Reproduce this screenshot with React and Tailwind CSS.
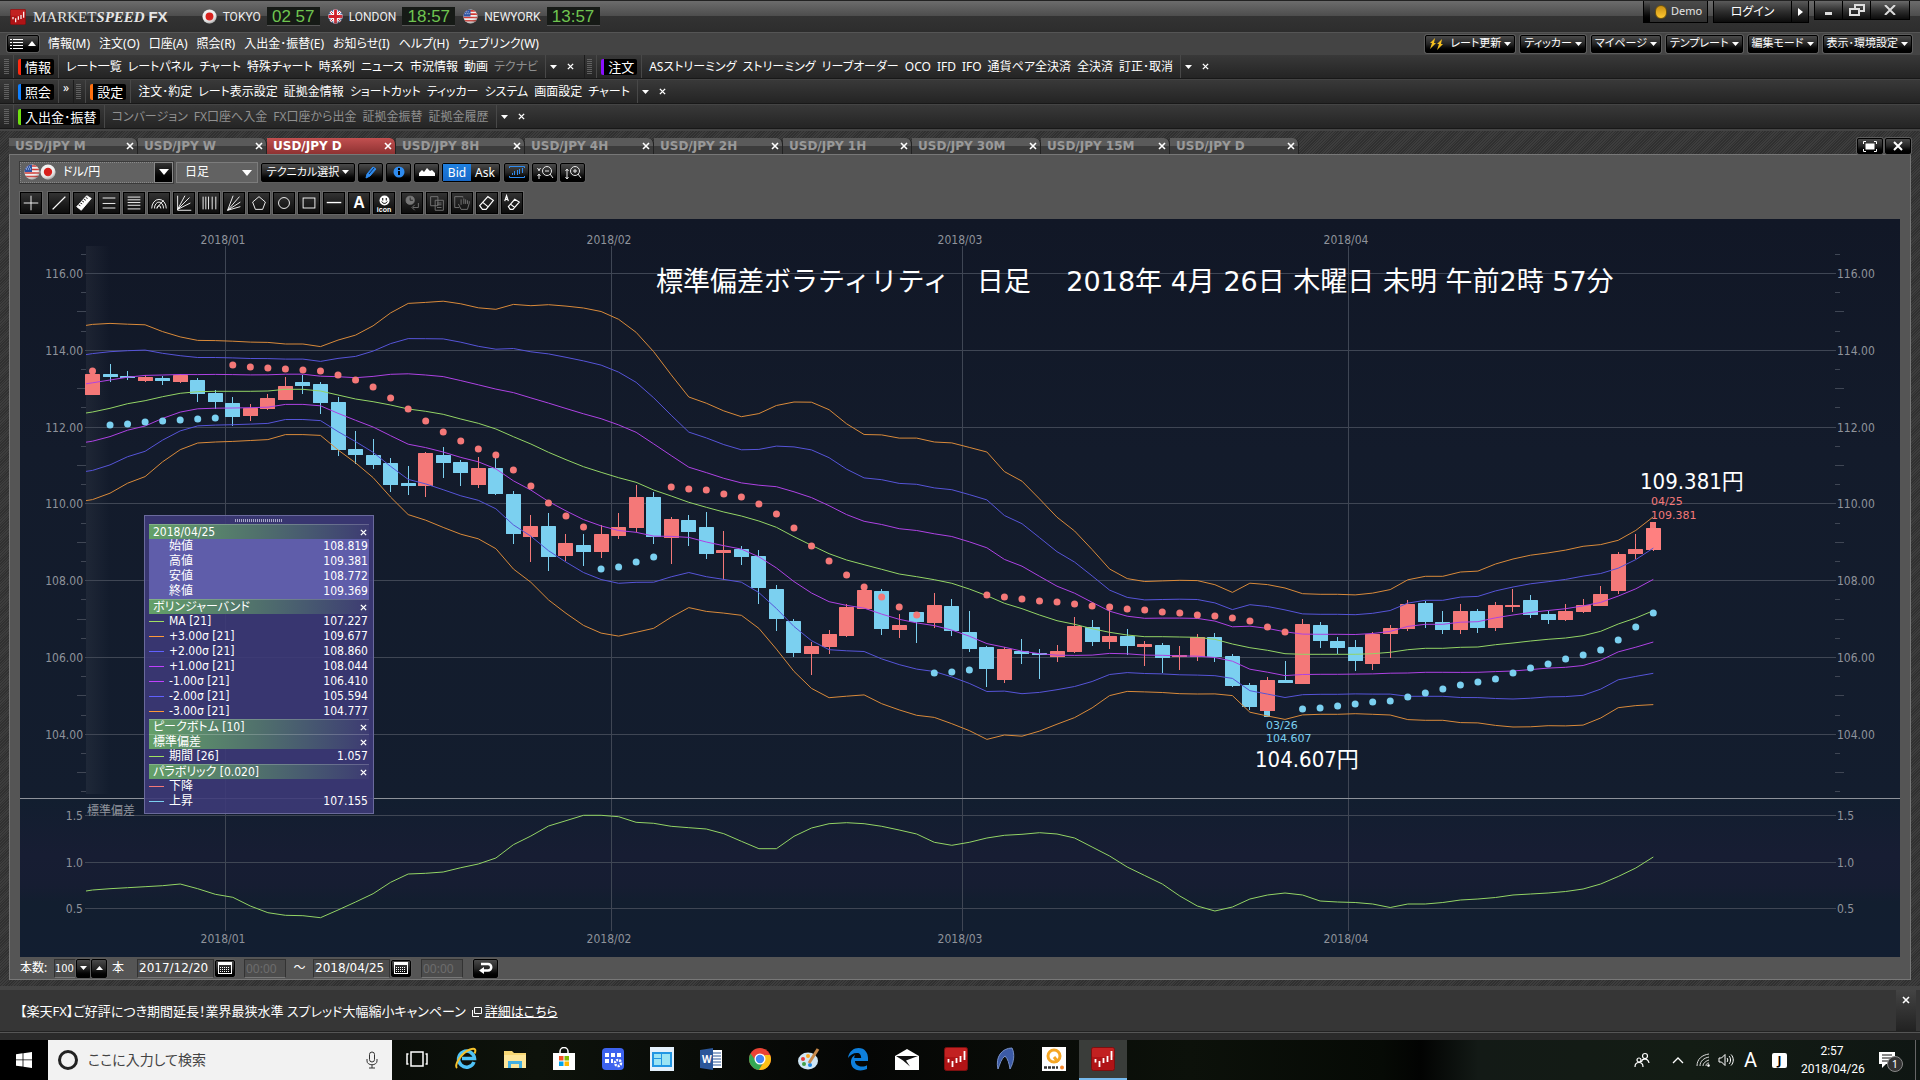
import clsx from 'clsx'

const UI = "font-['Noto_Sans','Noto_Sans_CJK_JP',sans-serif]"
const NUM = "font-['DejaVu_Sans_Condensed','Noto_Sans_CJK_JP',sans-serif]"
const WIDE = "font-['DejaVu_Sans','Noto_Sans_CJK_JP',sans-serif]"
const HATCH = 'bg-[repeating-linear-gradient(135deg,#303030_0px,#303030_1px,#3d3d3d_1px,#3d3d3d_2px)]'
const GLOSS = 'bg-linear-to-b from-[#4a4a4a] via-[#262626] to-black border border-black rounded-xs shadow-[0_0_0_1px_#5c5c5c]'

/* ---------- chart data, y in chart pixels ---------- */

// [direction, body top, body bottom, high, low]
const CANDLES = [
  ['u', 374, 395, 374, 395], ['d', 374, 377, 364, 382], ['d', 376, 378, 371, 380], ['u', 377, 381, 375, 382],
  ['d', 378, 381, 376, 385], ['u', 375, 382, 374, 383], ['d', 380, 394, 378, 402], ['d', 393, 402, 390, 409],
  ['d', 403, 417, 397, 426], ['u', 408, 416, 404, 421], ['u', 398, 409, 394, 410], ['u', 386, 400, 377, 400],
  ['d', 382, 386, 375, 394], ['d', 384, 403, 382, 414], ['d', 402, 450, 397, 456], ['d', 449, 455, 431, 464],
  ['d', 455, 465, 439, 469], ['d', 463, 485, 458, 492], ['d', 483, 486, 466, 495], ['u', 453, 486, 452, 497],
  ['d', 455, 463, 447, 478], ['d', 462, 473, 460, 486], ['u', 468, 485, 457, 488], ['d', 468, 494, 458, 495],
  ['d', 494, 534, 491, 544], ['u', 526, 537, 515, 562], ['d', 526, 557, 513, 571], ['u', 543, 556, 534, 561],
  ['d', 545, 552, 534, 566], ['u', 534, 552, 525, 558], ['u', 527, 536, 513, 539], ['u', 497, 528, 485, 532],
  ['d', 497, 537, 492, 544], ['u', 519, 538, 517, 564], ['d', 520, 532, 515, 546], ['d', 527, 554, 512, 559],
  ['u', 550, 553, 531, 580], ['d', 549, 557, 546, 565], ['d', 556, 588, 550, 604], ['d', 589, 619, 585, 631],
  ['d', 621, 653, 619, 657], ['u', 646, 654, 642, 675], ['u', 634, 647, 630, 654], ['u', 607, 636, 604, 637],
  ['u', 590, 609, 588, 609], ['d', 591, 629, 589, 635], ['u', 625, 630, 614, 638], ['d', 612, 622, 612, 643],
  ['u', 605, 623, 593, 628], ['d', 606, 631, 599, 636], ['d', 632, 649, 611, 652], ['d', 647, 669, 646, 687],
  ['u', 649, 680, 647, 683], ['d', 651, 654, 639, 664], ['d', 653, 655, 649, 679], ['u', 651, 657, 645, 662],
  ['u', 626, 652, 617, 653], ['d', 627, 642, 620, 646], ['u', 636, 642, 608, 649], ['d', 636, 646, 629, 655],
  ['u', 644, 647, 641, 666], ['d', 645, 658, 643, 673], ['u', 655, 657, 646, 670], ['u', 637, 657, 634, 661],
  ['d', 637, 657, 633, 662], ['d', 656, 686, 654, 687], ['d', 685, 707, 683, 710], ['u', 680, 711, 677, 716],
  ['d', 680, 683, 661, 683], ['u', 624, 684, 619, 684], ['d', 625, 641, 622, 648], ['d', 641, 648, 637, 654],
  ['d', 647, 661, 640, 671], ['u', 634, 664, 632, 670], ['u', 628, 634, 625, 658], ['u', 604, 629, 600, 631],
  ['d', 603, 622, 601, 628], ['d', 622, 630, 611, 634], ['u', 611, 630, 604, 634], ['d', 611, 628, 609, 633],
  ['u', 605, 628, 602, 631], ['u', 605, 607, 589, 612], ['d', 600, 615, 595, 618], ['d', 614, 620, 611, 624],
  ['u', 611, 620, 604, 621], ['u', 605, 612, 599, 613], ['u', 594, 606, 586, 606], ['u', 554, 591, 552, 594],
  ['u', 549, 554, 534, 559], ['u', 528, 550, 528, 551],
]

const MA = [
  412, 408.3, 403.7, 400.7, 396.7, 393.3, 391.7, 391.3, 391.3, 391.3, 391, 389.3, 389.3, 391, 395, 399, 401.7, 405,
  409, 411.3, 414.3, 419, 423.3, 429, 436.7, 444, 452.3, 459.7, 466.7, 472.3, 477.7, 482.3, 490, 496, 502.3, 507.3,
  512, 516, 521, 527.3, 536.7, 545.3, 553.7, 560, 564.7, 569.3, 574, 576.7, 579.7, 583.3, 589, 595.7, 603.3, 608.7,
  615, 620.7, 624.3, 628.7, 632.3, 635, 636.7, 636.7, 637, 637.3, 639.3, 644, 647.7, 650.3, 653.7, 654.3, 654.3,
  654.3, 654.3, 653.7, 652.3, 649.7, 648.3, 648.3, 647.3, 647, 644.7, 643, 641, 639.3, 638, 635.7, 631.3, 624, 618,
  610.7,
]

const SIGMA = [
  29.2, 28.3, 26.5, 25.3, 21.7, 18.8, 17.1, 16.9, 16.7, 16.4, 16.2, 15.1, 15.1, 14.8, 18.3, 21.3, 25.3, 30.7, 35.2,
  36.3, 37.7, 38.4, 38.5, 39.9, 44.1, 46.1, 49.2, 51.2, 52.9, 53.6, 52.8, 50, 46.1, 40.4, 35.1, 34.7, 33.7, 33.1,
  35.8, 40.6, 44.9, 47.7, 48, 45.4, 43.4, 44.8, 45.3, 46.2, 45.9, 46.8, 47.2, 47.9, 43.9, 42.5, 38.7, 34.5, 31.1,
  26.4, 21.1, 18.8, 18.4, 18.6, 18.9, 18.9, 18.2, 17.2, 21.5, 21.9, 21.9, 20.2, 20, 20, 19.8, 20.2, 20.9, 23.3, 24,
  24, 25.1, 25.3, 26.9, 28, 28.6, 28.8, 29.3, 29.8, 28.9, 27.9, 29.2, 31.3,
]

const STDDEV = [
  890, 888.7, 887.7, 886.7, 885.7, 884, 888.7, 894.3, 897.3, 906, 912.7, 915.3, 915.7, 917.7, 910, 902, 893.7, 882.3,
  874, 873.3, 872, 867.7, 864, 858, 844.7, 836, 826, 820.7, 815.3, 815.3, 816.7, 822.3, 823.3, 826.3, 827.7, 829,
  833.7, 841.3, 848.7, 848.7, 836.3, 828, 823.7, 822.7, 823.7, 826.3, 830, 834, 842.3, 845.3, 842.3, 838, 835.3,
  834.3, 832.7, 834, 838, 847, 856, 867, 875.5, 884, 896, 906, 911, 907, 899, 895, 893, 895, 901, 902, 902.5, 904,
  907.5, 904, 904, 902.5, 900, 899, 897.5, 895, 894, 893, 891.5, 889, 884, 876.5, 868, 857,
]

// parabolic runs: first candle index, colour, values
const SAR = [
  [0, '#f47878', [371]],
  [1, '#7bd0f0', [425, 424, 422, 421, 420, 419, 418]],
  [8, '#f47878', [365, 367, 368, 369, 370, 371, 375, 380, 387, 398, 409, 421, 432, 441, 449, 455, 470, 486, 503, 516, 527]],
  [29, '#7bd0f0', [569, 567, 562, 557]],
  [33, '#f47878', [487, 489, 490, 494, 497, 504, 514, 528, 546, 561, 575, 587, 597, 607, 615]],
  [48, '#7bd0f0', [673, 672, 670]],
  [51, '#f47878', [595, 597, 599, 601, 602, 604, 606, 607, 609, 610, 612, 613, 615, 616, 618, 621, 627, 632]],
  [69, '#7bd0f0', [709, 708, 706, 704, 702, 701, 697, 693, 689, 685, 682, 679, 673, 668, 664, 659, 655, 650, 640, 627, 613]],
]

const xAt = (i) => 92.5 + i * 17.537
const yAt = (price) => 273.5 + (116 - price) * 38.4
const lineAt = (price) => Math.floor(yAt(price)) + 0.5

const toPoints = (ys) =>
  [`86,${ys[0] + 1}`, ...ys.map((y, i) => `${xAt(i).toFixed(1)},${y.toFixed(1)}`)].join(' ')

const BANDS = [
  [3, '#d98a3a'], [-3, '#d98a3a'], [2, '#5654d8'], [-2, '#5654d8'], [1, '#ae42e4'], [-1, '#ae42e4'],
]

const MONTHS = [
  ['2018/01', 225.5, 223], ['2018/02', 611.5, 609], ['2018/03', 962.5, 960], ['2018/04', 1348.5, 1346],
]
const PRICES = [116, 114, 112, 110, 108, 106, 104]
const HALF_STEPS = Array.from({ length: 29 }, (_, i) => 116.5 - i * 0.5).filter((p) => p % 2 !== 0)
const DEV_LEVELS = [['1.5', 815.5], ['1.0', 862.5], ['0.5', 908.5]]

function PriceChart() {
  return (
    <svg viewBox="20 219 1880 738" className={clsx('block w-full h-auto', NUM)} role="img" aria-label="USD/JPY">
      <defs>
        <linearGradient id="main-bg" x1="0" y1="0" x2="0" y2="1">
          <stop offset="0" stopColor="#111726" />
          <stop offset="0.4" stopColor="#131b2b" />
          <stop offset="1" stopColor="#131d2e" />
        </linearGradient>
        <linearGradient id="sub-bg" x1="0" y1="0" x2="0" y2="1">
          <stop offset="0" stopColor="#121e2f" />
          <stop offset="0.35" stopColor="#171d33" />
          <stop offset="0.55" stopColor="#161d32" />
          <stop offset="0.65" stopColor="#121e2f" />
          <stop offset="1" stopColor="#121e31" />
        </linearGradient>
        <linearGradient id="edge" x1="0" y1="0" x2="1" y2="0">
          <stop offset="0" stopColor="#fff" stopOpacity="0.05" />
          <stop offset="1" stopColor="#fff" stopOpacity="0" />
        </linearGradient>
      </defs>
      <rect x="20" y="219" width="1880" height="580" fill="url(#main-bg)" />
      <rect x="20" y="799" width="1880" height="158" fill="url(#sub-bg)" />
      <rect x="86" y="246" width="24" height="548" fill="url(#edge)" />

      {/* grid */}
      <g stroke="#3f4654" strokeWidth="1">
        {MONTHS.map(([m, x]) => <line key={m} x1={x} x2={x} y1="246" y2="931" />)}
        {PRICES.map((p) => <line key={p} x1="85" x2="1836" y1={lineAt(p)} y2={lineAt(p)} />)}
        {DEV_LEVELS.map(([l, y]) => <line key={l} x1="85" x2="1836" y1={y} y2={y} />)}
        {HALF_STEPS.map((p) => {
          const y = lineAt(p)
          const len = p % 1 === 0 ? 9 : 5
          return (
            <g key={p}>
              <line x1={86 - len} x2="86" y1={y} y2={y} />
              <line x1="1835" x2={1835 + len} y1={y} y2={y} />
            </g>
          )
        })}
      </g>
      <line x1="20" x2="1900" y1="798.5" y2="798.5" stroke="#8e929a" />

      {/* axis labels */}
      <g fill="#8f939b" fontSize="12">
        {PRICES.map((p) => (
          <g key={p}>
            <text x="83" y={Math.floor(yAt(p)) + 5} textAnchor="end">{p.toFixed(2)}</text>
            <text x="1837" y={Math.floor(yAt(p)) + 5}>{p.toFixed(2)}</text>
          </g>
        ))}
        {DEV_LEVELS.map(([l, y]) => (
          <g key={l}>
            <text x="83" y={Math.floor(y) + 5} textAnchor="end">{l}</text>
            <text x="1837" y={Math.floor(y) + 5}>{l}</text>
          </g>
        ))}
        {MONTHS.map(([m, , x]) => (
          <g key={m} textAnchor="middle">
            <text x={x} y="244">{m}</text>
            <text x={x} y="943">{m}</text>
          </g>
        ))}
        <text x="87" y="815">標準偏差</text>
      </g>

      {/* candles */}
      {CANDLES.map(([dir, top, bottom, high, low], i) => {
        const fill = dir === 'u' ? '#f47878' : '#7bd0f0'
        const x = Math.floor(xAt(i)) + 0.5
        return (
          <g key={i} fill={i === 89 ? '#ff8080' : fill}>
            <rect x={x - 0.5} y={high} width="1" height={low - high} />
            <rect x={x - 7.5} y={top} width="15" height={bottom - top} rx="0.5" />
          </g>
        )
      })}
      <rect x="1264" y="711" width="6" height="6" fill="#7bd0f0" />
      <rect x="1650" y="522" width="6" height="6" fill="#f47878" />

      {/* bollinger bands */}
      <g fill="none" strokeWidth="1">
        {BANDS.map(([k, color]) => (
          <polyline key={k} stroke={color} points={toPoints(MA.map((y, i) => y - k * SIGMA[i]))} />
        ))}
        <polyline stroke="#93d465" points={toPoints(MA)} />
        <polyline stroke="#93d465" points={toPoints(STDDEV)} />
      </g>

      {/* parabolic */}
      {SAR.map(([start, color, values]) => (
        <g key={start} fill={color}>
          {values.map((y, i) => <circle key={i} cx={xAt(start + i)} cy={y} r="3.5" />)}
        </g>
      ))}

      {/* peak, bottom and notes */}
      <g fontSize="11" className={WIDE}>
        <g fill="#f47878">
          <text x="1651" y="505">04/25</text>
          <text x="1651" y="519">109.381</text>
        </g>
        <g fill="#7bd0f0">
          <text x="1266" y="729">03/26</text>
          <text x="1266" y="742">104.607</text>
        </g>
      </g>
      <g fill="#fff" fontSize="22">
        <text x="1640" y="489">109.381円</text>
        <text x="1255" y="767">104.607円</text>
      </g>
      <text x="656" y="291" fill="#fff" fontSize="27" className={clsx('whitespace-pre [font-feature-settings:normal]', WIDE)}>
        {'標準偏差ボラティリティ　日足　 2018年 4月 26日 木曜日 未明 午前2時 57分'}
      </text>
    </svg>
  )
}

/* ---------- legend window ---------- */

const LEGEND = [
  { title: '2018/04/25', tint: true, rows: [['', '始値', '108.819'], ['', '高値', '109.381'], ['', '安値', '108.772'], ['', '終値', '109.369']] },
  {
    title: 'ボリンジャーバンド',
    rows: [
      ['bg-[#a0e060]', 'MA [21]', '107.227'], ['bg-[#ff9838]', '+3.00σ [21]', '109.677'],
      ['bg-[#6060ff]', '+2.00σ [21]', '108.860'], ['bg-[#c040ff]', '+1.00σ [21]', '108.044'],
      ['bg-[#c040ff]', '-1.00σ [21]', '106.410'], ['bg-[#6060ff]', '-2.00σ [21]', '105.594'],
      ['bg-[#ff9838]', '-3.00σ [21]', '104.777'],
    ],
  },
  { title: 'ピークボトム [10]', rows: [] },
  { title: '標準偏差', rows: [['bg-[#a0e060]', '期間 [26]', '1.057']] },
  { title: 'パラボリック [0.020]', rows: [['bg-[#f47878]', '下降', ''], ['bg-[#7bd0f0]', '上昇', '107.155']] },
]

function LegendWindow() {
  return (
    <div className={clsx('absolute left-[124px] top-[296px] w-[230px] px-1 pb-1 border border-[#6a6a9c] bg-[#3d3a78]/90 text-xs text-white', NUM)}>
      <div className="h-2 flex justify-center items-center">
        <div className="w-12 h-[3px] bg-[repeating-linear-gradient(90deg,#a9a9c8_0px,#a9a9c8_1px,transparent_1px,transparent_2px)]" />
      </div>
      {LEGEND.map((sec) => (
        <section key={sec.title}>
          <div className="h-[15px] flex items-center justify-between pl-1 pr-0.5 border-t border-white/20 bg-linear-to-r from-[#64a068] via-[#50706c] via-50% to-[#3d3b72]">
            <h2 className="leading-[14px] whitespace-nowrap">{sec.title}</h2>
            <CloseButton className="size-[7px]" />
          </div>
          <table className={clsx('w-full border-collapse', sec.tint && 'bg-[#5f5daa]')}>
            <tbody>
              {sec.rows.map(([swatch, label, value]) => (
                <tr key={label} className="h-[15px] leading-[15px]">
                  <td className="w-5 p-0"><span className={clsx('block w-[15px] h-px', swatch)} /></td>
                  <th scope="row" className="p-0 font-normal text-left">{label}</th>
                  <td className="p-0 pr-px text-right">{value}</td>
                </tr>
              ))}
            </tbody>
          </table>
        </section>
      ))}
    </div>
  )
}

/* ---------- small parts ---------- */

function CloseButton({ className = 'size-2' }) {
  return (
    <button type="button" aria-label="閉じる" className="flex items-center justify-center">
      <svg viewBox="0 0 8 8" className={className} stroke="#fff" strokeWidth="1.6"><path d="M1 1l6 6M7 1L1 7" /></svg>
    </button>
  )
}

function Caret({ className = 'w-[7px] h-1' }) {
  return <svg viewBox="0 0 8 5" preserveAspectRatio="none" className={clsx('shrink-0', className)} fill="#fff"><path d="M0 0h8L4 5z" /></svg>
}

function FlagBall({ country, className = 'size-4' }) {
  return (
    <svg viewBox="0 0 16 16" className={clsx('shrink-0', className)}>
      <defs>
        <clipPath id={`ball-${country}`}><circle cx="8" cy="8" r="7.5" /></clipPath>
        <radialGradient id={`shade-${country}`} cx="0.4" cy="0.3" r="0.75">
          <stop offset="0.5" stopColor="#fff" stopOpacity="0" />
          <stop offset="1" stopColor="#000" stopOpacity="0.5" />
        </radialGradient>
      </defs>
      <g clipPath={`url(#ball-${country})`}>
        <rect width="16" height="16" fill="#f0f0f0" />
        {country === 'jp' && <circle cx="8" cy="8" r="4.2" fill="#d8201c" />}
        {country === 'uk' && (
          <>
            <rect width="16" height="16" fill="#23408e" />
            <path d="M0 0l16 16M16 0L0 16" stroke="#fff" strokeWidth="3" />
            <path d="M0 0l16 16M16 0L0 16" stroke="#d0202c" strokeWidth="1" />
            <path d="M8 0v16M0 8h16" stroke="#fff" strokeWidth="5" />
            <path d="M8 0v16M0 8h16" stroke="#d0202c" strokeWidth="3" />
          </>
        )}
        {country === 'us' && (
          <>
            <path d="M0 2h16M0 5.5h16M0 9h16M0 12.5h16" stroke="#d03a34" strokeWidth="1.7" />
            <rect width="8" height="8" fill="#2f55a4" />
            <path d="M1 3h6M2 5h5" stroke="#cfd8ee" strokeDasharray="1 1" />
          </>
        )}
        <rect width="16" height="16" fill={`url(#shade-${country})`} />
      </g>
    </svg>
  )
}

function SpeedLogo({ className }) {
  return (
    <svg viewBox="0 0 24 24" className={className}>
      <rect x="0.5" y="0.5" width="23" height="23" rx="2" fill="#b01416" stroke="#7c1010" />
      <rect x="1" y="1" width="22" height="9" rx="1.5" fill="#cf2a2a" opacity="0.6" />
      <path d="M4.500 12v3.500M8.500 14v6M12.500 11v5M16.500 9v6M20.500 4v9" stroke="#fff" strokeWidth="1.800" />
    </svg>
  )
}

/* ---------- header rows ---------- */

const CLOCKS = [['jp', 'TOKYO', '02 57'], ['uk', 'LONDON', '18:57'], ['us', 'NEWYORK', '13:57']]

function TitleBar() {
  return (
    <header className="h-8 flex items-center justify-between px-2.5 border-t border-[#222] bg-[linear-gradient(#6c6c6c,#4c4c4c_50%,#333_50%,#2d2d2d)]">
      <div className="flex items-center">
        <SpeedLogo className="size-4 mr-[7px]" />
        <h1 className="text-[15px] leading-5 text-[#e6e6e6] font-['Liberation_Serif',serif] whitespace-nowrap">
          MARKET<b className="italic">SPEED</b> <b className="font-['Liberation_Sans',sans-serif]">FX</b>
        </h1>
        <ul className="flex items-center gap-2 ml-[34px]">
          {CLOCKS.map(([c, city, time]) => (
            <li key={c} className="flex items-center gap-1.5 text-xs font-['Roboto',sans-serif] text-[#eee]">
              <FlagBall country={c} className="size-[15px]" />
              {city}
              <time className="w-[53px] h-[19px] text-center text-[17px] leading-[19px] text-[#6fc450] bg-[#161a16] border-b border-[#555] whitespace-pre font-['Liberation_Sans',sans-serif]">{time}</time>
            </li>
          ))}
        </ul>
      </div>
      <div className="flex items-start h-full gap-[5px]">
        <div className="flex h-[22px] border border-black border-t-0">
          <span className="w-1.5 bg-linear-to-b from-[#555] to-black" />
          <span className="w-[57px] flex items-center justify-center gap-1 bg-linear-to-b from-[#4c4c4c] to-[#2e2e2e] text-[11px] text-[#e4e4e4]">
            <span className="w-3 h-3.5 rounded-full border border-[#6b5210] bg-linear-to-b from-[#c98f10] to-[#ffc830]" />
            Demo
          </span>
        </div>
        <div className="flex h-[22px] border border-black border-t-0 bg-linear-to-b from-[#5a5a5a] via-[#2e2e2e] to-[#0c0c0c] text-xs text-white">
          <button type="button" className="w-[78px] border-r border-black">ログイン</button>
          <button type="button" aria-label="ログインメニュー" className="w-4 flex items-center justify-center">
            <svg viewBox="0 0 5 8" className="w-[5px] h-2" fill="#fff"><path d="M0 0v8l5-4z" /></svg>
          </button>
        </div>
        <div className="flex h-[19px] border border-black border-t-0 bg-linear-to-b from-[#6a6a6a] via-[#333] to-[#0c0c0c]">
          <button type="button" aria-label="最小化" className="w-7 border-r border-black flex items-center justify-center">
            <svg viewBox="0 0 10 10" className="size-2.5" fill="#ddd"><path d="M1 7h7v3H1z" /></svg>
          </button>
          <button type="button" aria-label="元に戻す" className="w-7 border-r border-black flex items-center justify-center">
            <svg viewBox="0 0 16 12" className="w-4 h-3" fill="none" stroke="#ddd" strokeWidth="2"><path d="M6 5V1h9v6h-4M1 5h9v6H1z" /></svg>
          </button>
          <button type="button" aria-label="閉じる" className="w-[38px] flex items-center justify-center">
            <svg viewBox="0 0 12 10" className="w-3 h-2.5" stroke="#ddd" strokeWidth="2"><path d="M1 0l10 10M11 0L1 10" /></svg>
          </button>
        </div>
      </div>
    </header>
  )
}

const MENU = ['情報(M)', '注文(O)', '口座(A)', '照会(R)', '入出金･振替(E)', 'お知らせ(I)', 'ヘルプ(H)', 'ウェブリンク(W)']
const MENU_BUTTONS = ['ティッカー', 'マイページ', 'テンプレート', '編集モード', '表示･環境設定']

function MenuRow() {
  return (
    <nav className="h-[22px] flex items-center justify-between pl-[7px] pr-2 bg-[#444] border-t border-[#555] text-xs text-white whitespace-nowrap">
      <div className="flex items-center gap-[9px]">
        <button type="button" aria-label="メニュー" className={clsx('w-8 h-[17px] flex items-center justify-center gap-1', GLOSS)}>
          <svg viewBox="0 0 14 11" className="w-3.5 h-[11px]" stroke="#fff"><path d="M0 1.500h2M3 1.500h10M0 4.500h2M3 4.500h10M0 7.500h2M3 7.500h10M0 10.500h2M3 10.500h10" /></svg>
          <Caret className="w-2 h-[5px] rotate-180" />
        </button>
        {MENU.map((m) => <button type="button" key={m}>{m}</button>)}
      </div>
      <div className="flex items-center gap-[5px] text-[11px]">
        <button type="button" className={clsx('h-[18px] flex items-center gap-[3px] px-[3px]', GLOSS)}>
          <svg viewBox="0 0 14 12" className="w-3.5 h-3 mr-1" fill="#f5c020"><path d="M6 0L1 5h2L1 11l6-6H5zM13 1L8 6h2l-2 6 6-6h-2z" /></svg>
          レート更新<Caret />
        </button>
        {MENU_BUTTONS.map((m) => (
          <button type="button" key={m} className={clsx('h-[18px] flex items-center gap-[3px] px-[3px]', GLOSS)}>{m}<Caret /></button>
        ))}
      </div>
    </nav>
  )
}

const Grip = () => (
  <span className="w-[5px] h-4 ml-0.5 mr-1 shrink-0 bg-[repeating-linear-gradient(#777_0px,#777_1px,transparent_1px,transparent_2px)] opacity-70" />
)

function ToolGroup({ label, bar, items, muted = [], more, closable = true }) {
  return (
    <div className="h-full flex items-center border-r border-[#1c1c1c] last:border-r-0">
      <Grip />
      <div className="flex items-center h-full px-1 border-x border-[#484848]">
        <span className={clsx('h-4 pl-1 pr-[3px] border-l-[3px] rounded-xs bg-black text-[13px] leading-4', bar)}>{label}</span>
      </div>
      {items.length > 0 && (
        <div className="flex items-center gap-1.5 px-[7px]">
          {items.map((t) => (
            <button type="button" key={t} className={muted.includes(t) ? 'text-[#909090]' : 'text-white'}>{t}</button>
          ))}
        </div>
      )}
      {more && <span className="self-start px-1 leading-4">»</span>}
      {closable && (
        <div className="flex items-center gap-2.5 h-full pl-1 pr-2.5 border-l border-[#484848]">
          <Caret className="w-[7px] h-1" />
          <CloseButton className="size-[7px]" />
        </div>
      )}
    </div>
  )
}

function ToolRow({ children }) {
  return (
    <div className="h-[25px] pl-0.5 flex items-center bg-linear-to-b from-[#393939] to-[#242424] border-t border-[#444] border-b border-b-[#181818] text-xs text-white whitespace-nowrap">
      {children}
    </div>
  )
}

const DEPOSIT = ['コンバージョン', 'FX口座へ入金', 'FX口座から出金', '証拠金振替', '証拠金履歴']

/* ---------- chart window ---------- */

const TABS = ['M', 'W', 'D', '8H', '4H', '2H', '1H', '30M', '15M', 'D']

function TabStrip() {
  return (
    <div className="flex items-end justify-between h-[23px]">
      <ul className="flex items-end">
        {TABS.map((t, i) => (
          <li
            key={i}
            className={clsx(
              'w-[129px] h-4 flex items-center justify-between pl-1.5 pr-[3px] border-r border-[#222] rounded-tr-md text-xs font-bold leading-4',
              WIDE,
              i === 2 ? 'bg-linear-to-b from-[#c25050] to-[#8e3232] text-white' : 'bg-[linear-gradient(#5a5a5a_50%,#3c3c3c_50%)] text-[#999]',
            )}
          >
            <button type="button">USD/JPY {t}</button>
            <CloseButton className="size-2" />
          </li>
        ))}
      </ul>
      <div className="flex gap-0.5">
        <button type="button" aria-label="最大化" className={clsx('w-[26px] h-4 flex items-center justify-center', GLOSS)}>
          <svg viewBox="0 0 14 11" className="w-3.5 h-[11px]" fill="none" stroke="#fff">
            <path d="M0.500 3V0.500H3M11 0.500h2.500V3M13.500 8v2.500H11M3 10.500H0.500V8" /><rect x="3" y="3" width="8" height="5" fill="#fff" />
          </svg>
        </button>
        <button type="button" aria-label="閉じる" className={clsx('w-[26px] h-4 flex items-center justify-center', GLOSS)}>
          <svg viewBox="0 0 10 10" className="size-2.5" stroke="#fff" strokeWidth="2"><path d="M1 1l8 8M9 1L1 9" /></svg>
        </button>
      </div>
    </div>
  )
}

function IconButton({ label, children }) {
  return (
    <button type="button" aria-label={label} className={clsx('w-[25px] h-[19px] flex items-center justify-center', GLOSS)}>
      <svg viewBox="0 0 18 16" className="w-[18px] h-4 shrink-0" fill="none" stroke="#e8e8e8">{children}</svg>
    </button>
  )
}

function ChartControls() {
  return (
    <div className="flex items-center gap-[3px] h-[22px] text-xs text-white">
      <div className="relative">
        <select aria-label="通貨ペア" defaultValue="usd" className="w-[153px] h-[21px] pl-[42px] appearance-none bg-[#626262] border border-[#8a8a8a] border-dotted outline-1 outline-[#3a3a3a]">
          <option value="usd">ドル/円</option>
        </select>
        <span className="absolute left-1 top-0.5 flex pointer-events-none"><FlagBall country="us" /><FlagBall country="jp" /></span>
        <span className="absolute right-0 top-0 w-[19px] h-[21px] flex items-center justify-center border border-[#888] bg-linear-to-b from-[#333] to-black pointer-events-none"><Caret className="w-2.5 h-1.5" /></span>
      </div>
      <div className="relative">
        <select aria-label="足種" defaultValue="d" className="w-[82px] h-[21px] pl-2 appearance-none bg-[#626262] border border-[#7c7c7c]">
          <option value="d">日足</option>
        </select>
        <Caret className="absolute right-1.5 top-2 w-2.5 h-1.5 pointer-events-none" />
      </div>
      <button type="button" className={clsx('w-[94px] h-[19px] flex items-center justify-center gap-[3px] text-[11px] whitespace-nowrap', GLOSS)}>テクニカル選択<Caret /></button>
      <IconButton label="描画"><path d="M5 10l6-7 3 2-6 7-4 2z" fill="#2f8cf0" stroke="#2f8cf0" /><path d="M7 10l5-6" stroke="#0a2a55" /></IconButton>
      <IconButton label="情報"><circle cx="9" cy="8" r="5.500" fill="#2f8cf0" stroke="none" /><path d="M9 7v4M9 4v2" stroke="#000" strokeWidth="2" /></IconButton>
      <IconButton label="エリア"><path d="M1 12V9l3-3 2 2 3-4 3 3 2-1 3 3v3z" fill="#fff" stroke="none" /></IconButton>
      <div className={clsx('w-[58px] h-[19px] mr-px flex', GLOSS)}>
        <button type="button" aria-pressed="true" className="flex-1 leading-[17px] bg-linear-to-b from-[#1f80e0] to-[#1668c8]">Bid</button>
        <button type="button" aria-pressed="false" className="flex-1 leading-[17px]">Ask</button>
      </div>
      <IconButton label="ライン"><path d="M1.500 4V2.500h15V4M1.500 12v1.500h15V12M4.500 9v2M6.500 7v4M9.500 6v5M11.500 5v5M14.500 4v5" stroke="#2f8cf0" /></IconButton>
      <IconButton label="縮小"><circle cx="11" cy="7" r="4.500" /><path d="M9 7h4M14 10l3 4M3 5v2M3 10v5M1.500 12L3 10l1.500 2M1.500 4L3 6.500 4.500 4" /></IconButton>
      <IconButton label="拡大"><circle cx="11" cy="7" r="4.500" /><path d="M9 7h4M11 5v4M14 10l3 4M3 5v10M1.500 7L3 5l1.500 2M1.500 13L3 15l1.500-2" /></IconButton>
    </div>
  )
}

const TOOLS = [
  ['十字', <path key="p" d="M3 11h16M11 3v16" />],
  ['線', <path key="p" d="M4 18L18 4" strokeWidth="1.5" />],
  ['定規', <g key="p"><path d="M3 15L14 3l5 3L8 19z" fill="#fff" /><path d="M5 13l2 1M7 11l2 1M9 9l2 1M11 7l2 1M13 5l2 1" stroke="#111" /></g>],
  ['平行線', <path key="p" d="M4 5.500h14M4 11.500h14M4 16.500h14" />],
  ['多重線', <path key="p" d="M4 4.500h14M4 7.500h14M4 10.500h14M4 13.500h14M4 17.500h14" />],
  ['アーク', <path key="p" d="M3 17a8 10 0 0 1 16 0M6 17a5 7 0 0 1 10 0M9 17a2 3 0 0 1 4 0M8 17l8-9" />],
  ['ファン', <path key="p" d="M4 3v16h15M4 18L12 3M4 18L17 5M4 18l14-7" />],
  ['縦線', <path key="p" d="M4.500 4v14M7.500 4v14M10.500 4v14M14.500 4v14M18.500 4v14" />],
  ['ギャン', <path key="p" d="M4 19L10 3M4 19L17 4M4 19l14-9M4 19l14-4" />],
  ['五角形', <path key="p" d="M11 4l7 6-3 8H7l-3-8z" />],
  ['円', <circle key="p" cx="11" cy="11" r="6" />],
  ['四角', <rect key="p" x="4.500" y="5.500" width="13" height="11" />],
  ['水平線', <path key="p" d="M3 10.500h16" strokeWidth="1.500" />],
  ['文字', null, 'A'],
  ['アイコン', <g key="p"><circle cx="11" cy="11" r="10" fill="#fff" stroke="none" /><path d="M7.500 6v5M14.500 6v5M5.500 13c2 5 9 5 11 0" stroke="#000" strokeWidth="2" /></g>, 'icon'],
  ['履歴', <g key="p" stroke="#777"><circle cx="9" cy="8" r="4.500" fill="#777" /><path d="M9 5v3h3" stroke="#222" /><path d="M18 11v5h-6M14 13l-3 3 3 3" /></g>],
  ['複製', <path key="p" d="M4 4h8v10H4zM9 8h9v11H9zM11 11h5M11 13h5M11 16h5" stroke="#777" />],
  ['移動', <path key="p" d="M12 5V4H3v12h5M7 12l3 6h7l2-7V9M10 13V7M13 12V6M15 12V7M17 12V8" stroke="#777" />],
  ['消去', <path key="p" d="M3 14l9-10 6 4-8 10H6zM6 10l6 5" strokeWidth="1.300" />],
  ['全消去', <path key="p" d="M7 15l7-8 5 3-7 8h-3zM9 12l5 4M3 9l2-6 2 6M4 7h2" strokeWidth="1.300" />],
]

function DrawTools() {
  return (
    <div className="flex gap-[3px] h-[22px]">
      {TOOLS.map(([label, shape, text], i) => (
        <button
          type="button"
          key={label}
          aria-label={label}
          className={clsx(
            'w-[22px] h-[22px] border border-black bg-linear-to-b from-[#333] to-[#0c0c0c] shadow-[0_0_0_1px_#666] text-white font-bold leading-none',
            (i === 0 || i === 14) && 'mr-[3px]',
            text === 'icon' && "flex flex-col items-center justify-end text-[7px] font-['Liberation_Sans',sans-serif]",
            text === 'A' && "text-base font-['Liberation_Sans',sans-serif]",
          )}
        >
          {shape && (
            <svg viewBox="0 0 22 22" className={text ? 'size-[11px]' : 'size-5'} fill="none" stroke="#fff">{shape}</svg>
          )}
          {text}
        </button>
      ))}
    </div>
  )
}

const FIELD = 'h-[19px] bg-[#4c4c4c] border border-[#333] border-b-[#777] text-white'

function CalendarButton() {
  return (
    <button type="button" aria-label="カレンダー" className={clsx('w-5 h-[17px] flex items-center justify-center', GLOSS)}>
      <svg viewBox="0 0 14 12" className="w-3.5 h-3"><rect x="0.500" y="0.500" width="13" height="11" fill="none" stroke="#fff" /><path d="M1 2h12" stroke="#fff" strokeWidth="2" /><path d="M2 5.500h10M2 7.500h10M2 9.500h10" stroke="#fff" strokeDasharray="1 1" /></svg>
    </button>
  )
}

function RangeBar() {
  return (
    <form className="h-[22px] flex items-center text-xs text-white whitespace-nowrap">
      <label htmlFor="bars" className="w-[34px]">本数:</label>
      <input id="bars" defaultValue="100" className={clsx('w-[22px] text-[11px]', FIELD, NUM)} />
      <button type="button" aria-label="減らす" className={clsx('w-[15px] h-[19px] flex items-center justify-center', GLOSS)}><Caret /></button>
      <button type="button" aria-label="増やす" className={clsx('w-4 h-[19px] flex items-center justify-center', GLOSS)}><Caret className="w-[7px] h-1 rotate-180" /></button>
      <span className="w-[30px] pl-[5px]">本</span>
      <input aria-label="開始日" defaultValue="2017/12/20" className={clsx('w-[77px] px-px', FIELD, WIDE)} />
      <span className="w-[30px] pl-px"><CalendarButton /></span>
      <input aria-label="開始時刻" defaultValue="00:00" disabled className={clsx('w-[42px] px-px disabled:text-[#6c6c6c]', FIELD)} />
      <span className="w-[27px] text-center">～</span>
      <input aria-label="終了日" defaultValue="2018/04/25" className={clsx('w-[77px] px-px', FIELD, WIDE)} />
      <span className="w-[31px] pl-px"><CalendarButton /></span>
      <input aria-label="終了時刻" defaultValue="00:00" disabled className={clsx('w-[42px] px-px disabled:text-[#6c6c6c]', FIELD)} />
      <button type="button" aria-label="適用" className={clsx('w-[25px] h-[19px] ml-2.5 flex items-center justify-center', GLOSS)}>
        <svg viewBox="0 0 16 12" className="w-4 h-3" fill="none" stroke="#fff" strokeWidth="2.500"><path d="M3 2h7a3 3 0 0 1 0 6.500H5" /><path d="M6 5v7L1 8.500z" fill="#fff" stroke="none" /></svg>
      </button>
    </form>
  )
}

/* ---------- taskbar ---------- */

const TASK_ICONS = [
  ['タスク ビュー', <g key="i" fill="none" stroke="#fff" strokeWidth="1.500"><rect x="6" y="5" width="12" height="14" /><path d="M3.500 7H2v10h1.500M20.500 7H22v10h-1.500" /></g>],
  ['Internet Explorer', <g key="i" fill="none"><path d="M20 15a8 8 0 1 1 .5-3.500H8" stroke="#4fc3f7" strokeWidth="3.500" /><path d="M3 21C0 18 7 6 16 2.500c6-2 6 1 4.500 4" stroke="#f2c12e" strokeWidth="2" /></g>],
  ['エクスプローラー', <g key="i"><path d="M1 4h8l2 2h12v15H1z" fill="#f7d774" /><path d="M1 8h22v13H1z" fill="#fde69a" /><path d="M5 21v-7h14v7h-3v-4H8v4z" fill="#43b0e4" /></g>],
  ['ストア', <g key="i"><path d="M8 7V4.500a4 4 0 0 1 8 0V7" fill="none" stroke="#fff" strokeWidth="1.500" /><path d="M1 6h22v17H1z" fill="#fff" /><path d="M7 9h4.500v4.500H7z" fill="#f25022" /><path d="M12.500 9H17v4.500h-4.500z" fill="#7fba00" /><path d="M7 14.500h4.500V19H7z" fill="#00a4ef" /><path d="M12.500 14.500H17V19h-4.500z" fill="#ffb900" /></g>],
  ['設定ツール', <g key="i"><rect x="1" y="1" width="22" height="22" rx="4" fill="#3d63ee" /><path d="M4 6h4v4H4zM10 6h4v4h-4zM16 6h4v4h-4zM4 12h4v4H4zM10 12h2v4h-2z" fill="#fff" /><circle cx="17" cy="16" r="3" fill="none" stroke="#fff" strokeWidth="2.500" strokeDasharray="2 1" /></g>],
  ['レイアウト', <g key="i"><rect x="0" y="0" width="24" height="24" fill="#e3f0fb" /><path d="M2 5h20v15H2z" fill="#2196e3" /><path d="M4 7h7v4H4zM4 12h7v6H4zM12 7h8v11h-8z" fill="#9be4f4" /></g>],
  ['Word', <g key="i"><path d="M12 3h11v18H12z" fill="#fff" /><path d="M14 6h8M14 9h8M14 12h8M14 15h8M14 18h8" stroke="#2b579a" /><path d="M1 3l13-2v22L1 21z" fill="#2b579a" /></g>, 'W'],
  ['Chrome', <g key="i"><circle cx="12" cy="12" r="11" fill="#ea4335" /><path d="M2.500 6.500A11 11 0 0 0 11 23l5-9-8 0z" fill="#34a853" /><path d="M23 12a11 11 0 0 1-12 11l5.500-9V8H22c.6 1.200 1 2.500 1 4z" fill="#fbc116" /><circle cx="12" cy="12" r="5.500" fill="#fff" /><circle cx="12" cy="12" r="4.200" fill="#4285f4" /></g>],
  ['ペイント', <g key="i"><ellipse cx="11" cy="14" rx="10" ry="8.500" fill="#cfe6f5" /><circle cx="6" cy="12" r="2" fill="#e53935" /><circle cx="11" cy="9" r="2" fill="#f9a825" /><circle cx="7" cy="17" r="2" fill="#43a047" /><circle cx="13" cy="18" r="2" fill="#1e88e5" /><path d="M12 16L21 2" stroke="#c98a4a" strokeWidth="3" /></g>],
  ['Edge', <path key="i" d="M2 11C3 4 8 1 12.500 1 19 1 22 6 22 11v3H9c0 4 4 5.500 7 5.500 2 0 4-.6 5-1.300v3.900C19 23 17 23.500 14.500 23.500 8 23.500 4.500 19 5 14c.3-3 2-5 4-6-.5 1-.7 2-.8 3h7C15 8 14 6 11 6 7 6 4 8 2 11z" fill="#0e7fdc" />],
  ['メール', <g key="i"><path d="M0 9l12-7 12 7v14H0z" fill="#fff" /><path d="M1 9h22l-12 4.500 4 6-7-6z" fill="#101010" /></g>],
  ['MARKETSPEED FX', <SpeedLogo key="i" />],
  ['ビューア', <path key="i" d="M5 22C2 10 9 1 19 1c3 6 2 14-2 21-1-6-2-10-5-13-4 3-5 8-7 13z" fill="#3c5ba6" stroke="#7790c8" />],
  ['チャート', <g key="i"><rect width="24" height="24" fill="#fff" /><circle cx="12" cy="9" r="6" fill="none" stroke="#f5a623" strokeWidth="3" /><path d="M12 10l4 5" stroke="#f5a623" strokeWidth="3" /><path d="M2 20.500h14" stroke="#333" strokeWidth="2.500" strokeDasharray="3 1" /><circle cx="20" cy="20.500" r="2" fill="#f5862a" /></g>],
  ['MARKETSPEED FX 実行中', <SpeedLogo key="i" />],
]

function Taskbar() {
  return (
    <footer className="h-10 flex items-stretch bg-[linear-gradient(90deg,#000_0%,#0d120b_28%,#050605_45%,#0c110a_62%,#060a05_72%,#020302_74%,#131a16_77%,#131c14_88%,#0f1613_100%)] text-white">
      <button type="button" aria-label="スタート" className="w-12 flex items-center justify-center bg-black">
        <svg viewBox="0 0 16 16" className="size-4" fill="#fff"><path d="M0 2.200l6.600-.9v6.200H0zM7.400 1.200L16 0v7.500H7.400zM0 8.300h6.600v6.300L0 13.700zM7.400 8.300H16V16l-8.600-1.200z" /></svg>
      </button>
      <label className="w-[344px] flex items-center gap-2.5 pl-2.5 pr-3.5 bg-[#f2f2f2]">
        <span className="size-5 shrink-0 rounded-full border-[3px] border-[#222]" />
        <input aria-label="検索" placeholder="ここに入力して検索" className="flex-1 min-w-0 text-sm text-[#333] placeholder:text-[#444] bg-transparent outline-none" />
        <svg viewBox="0 0 12 18" className="w-3 h-[18px]" fill="none" stroke="#333"><rect x="3.500" y="1" width="5" height="10" rx="2.500" /><path d="M1 8v2c0 5 10 5 10 0V8M6 14v3M3 17h6" /></svg>
      </label>
      <div className="flex gap-px pl-px">
        {TASK_ICONS.map(([label, icon, letter], i) => (
          <button
            type="button"
            key={label}
            aria-label={label}
            className={clsx('relative w-12 flex items-center justify-center border-b-2', i === 14 ? 'bg-[#3a3d3a] border-[#76b9ed]' : 'border-transparent')}
          >
            <svg viewBox="0 0 24 24" className="size-6">{icon}</svg>
            {letter && <span className="absolute left-[15px] top-3 text-[10px] font-bold leading-[14px]">{letter}</span>}
          </button>
        ))}
      </div>
      <div className="flex items-center ml-auto pr-1">
        <svg viewBox="0 0 16 16" className="size-4" fill="none" stroke="#fff" strokeWidth="1.200"><circle cx="5" cy="8" r="2" /><circle cx="11" cy="4" r="2.500" /><path d="M1 15c0-6 8-6 8 0M7.500 10C8 6 14 6 15 11" /></svg>
        <svg viewBox="0 0 12 7" className="w-3 h-[7px] ml-[22px]" fill="none" stroke="#fff" strokeWidth="1.300"><path d="M1 6l5-5 5 5" /></svg>
        <svg viewBox="0 0 14 14" className="size-3.5 ml-3" fill="none" stroke="#ddd"><path d="M1 13C1 6 6 2 13 1M4 13c0-5 4-8 9-9M7 13c0-3 3-5 6-6M10 13c0-2 1-3 3-3" /><circle cx="12.500" cy="12.500" r="1" fill="#fff" /></svg>
        <svg viewBox="0 0 16 14" className="w-4 h-3.5 ml-2" fill="none" stroke="#fff"><path d="M1 5h2.500L7 1.500v11L3.500 9H1zM9 5c1 1 1 3 0 4M11 3c2 2 2 6 0 8M13 1.500c3 3 3 8 0 11" /></svg>
        <span className="ml-2.5 text-xl leading-none font-['Roboto',sans-serif]">A</span>
        <span className="ml-[15px] size-[15px] rounded-xs bg-white text-black text-xs font-bold leading-[15px] text-center">J</span>
        <time className="ml-3.5 w-[62px] text-center text-xs leading-[18px] font-['Roboto',sans-serif]">2:57<br />2018/04/26</time>
        <button type="button" aria-label="通知" className="relative w-7 h-6 ml-3 mr-3">
          <svg viewBox="0 0 16 16" className="size-4 ml-1" fill="#fff"><path d="M0 0h16v12H7l-4 4v-4H0z" /><path d="M3 3h10M3 6h10M3 9h6" stroke="#111" /></svg>
          <span className="absolute left-3 top-2 size-4 rounded-full border border-[#888] bg-[#333] text-[11px] leading-[14px] text-center">1</span>
        </button>
        <span className="h-10 w-px bg-[#666]" />
      </div>
    </footer>
  )
}

export default function App() {
  return (
    <div className={clsx("min-h-screen flex flex-col bg-[#262626] [font-feature-settings:'palt']", UI)}>
      <TitleBar />
      <MenuRow />
      <ToolRow>
        <ToolGroup
          label="情報"
          bar="border-[#ff2a10]"
          items={['レート一覧', 'レートパネル', 'チャート', '特殊チャート', '時系列', 'ニュース', '市況情報', '動画', 'テクナビ']}
          muted={['テクナビ']}
        />
        <ToolGroup
          label="注文"
          bar="border-[#8a10ff]"
          items={['ASストリーミング', 'ストリーミング', 'リーブオーダー', 'OCO', 'IFD', 'IFO', '通貨ペア全決済', '全決済', '訂正･取消']}
        />
      </ToolRow>
      <ToolRow>
        <ToolGroup label="照会" bar="border-[#1080ff]" items={[]} more closable={false} />
        <ToolGroup
          label="設定"
          bar="border-[#ff7010]"
          items={['注文･約定', 'レート表示設定', '証拠金情報', 'ショートカット', 'ティッカー', 'システム', '画面設定', 'チャート']}
        />
      </ToolRow>
      <ToolRow>
        <ToolGroup label="入出金･振替" bar="border-[#70e010]" items={DEPOSIT} muted={DEPOSIT} />
      </ToolRow>

      <main className={clsx('flex-1 border-t-2 border-[#444] px-[9px] pb-[5px]', HATCH)}>
        <TabStrip />
        <div className="px-2.5 border border-[#777] bg-[#555]">
          <div className="flex flex-col gap-[9px] pt-1.5 pb-[5px]">
            <ChartControls />
            <DrawTools />
          </div>
          <div className="relative">
            <PriceChart />
            <LegendWindow />
          </div>
          <RangeBar />
        </div>
      </main>

      <aside className="flex items-stretch justify-between h-[46px] border-t-4 border-[#444] bg-[#363636] border-b border-b-[#222] text-[13px] text-white">
        <p className="flex items-center pl-5 pt-0.5 whitespace-nowrap">
          【楽天FX】ご好評につき期間延長！業界最狭水準 スプレッド大幅縮小キャンペーン
          <svg viewBox="0 0 10 10" className="size-2.5 ml-1.5 mr-[3px]" fill="none" stroke="#fff"><path d="M2.500 0.500h7v6h-7zM0.500 3v6.500H7" /></svg>
          <a href="#campaign" className="underline">詳細はこちら</a>
        </p>
        <div className="w-5 mr-1 pt-1.5 flex items-start justify-center bg-linear-to-b from-[#444] to-[#222]"><CloseButton className="size-2" /></div>
      </aside>
      <div className="h-2 border-t border-[#555] bg-[#2a2a2a]" />
      <Taskbar />
    </div>
  )
}
